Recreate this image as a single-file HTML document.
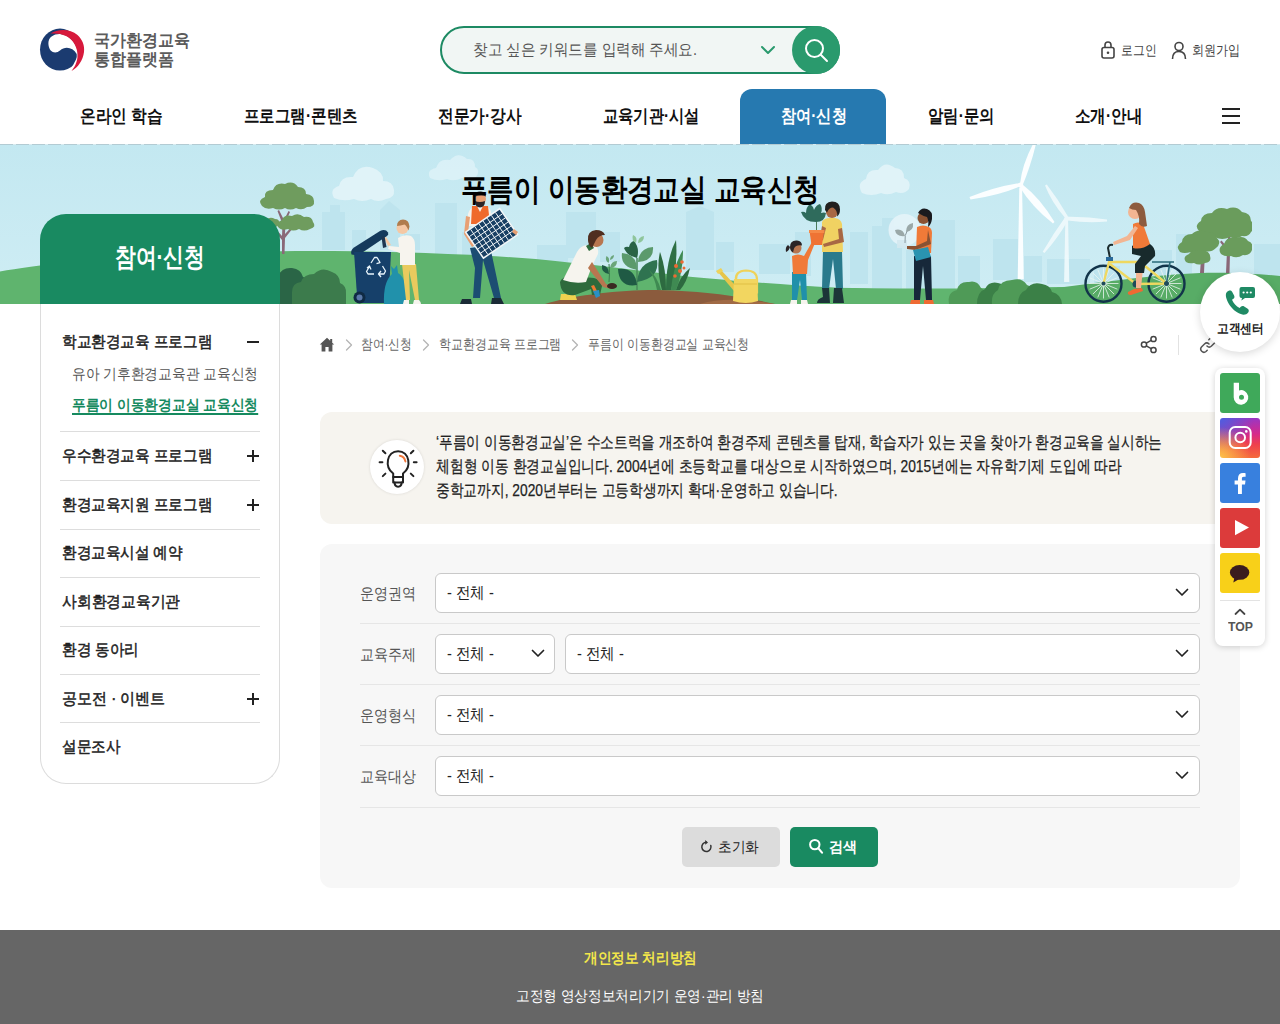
<!DOCTYPE html>
<html lang="ko">
<head>
<meta charset="utf-8">
<title>푸름이 이동환경교실 교육신청</title>
<style>
*{box-sizing:border-box;margin:0;padding:0}
html,body{width:1280px;height:1024px;overflow:hidden;background:#fff}
body{font-family:"Liberation Sans",sans-serif;color:#222;position:relative}
.abs{position:absolute}
.t{position:absolute;white-space:nowrap;line-height:1;transform-origin:0 0}
/* header */
#logo-txt{left:94px;top:32px;font-size:17px;font-weight:bold;color:#5b5b5b;line-height:18.5px}
#search{left:440px;top:26px;width:400px;height:48px;border:2px solid #1d8a63;border-radius:24px;background:#f1f6f4}
#search .ph{left:30px;top:14px;font-size:16px;color:#555}
#sbtn{left:792px;top:26px;width:48px;height:48px;border-radius:24px;background:#2a9a6d}
.util{font-size:14px;color:#444;top:43px}
.nav{z-index:4;top:107px;font-size:18px;font-weight:bold;color:#111}
#navact{left:740px;top:89px;width:146px;height:55px;z-index:3;background:#2679b0;border-radius:12px 12px 0 0}
#navline{left:0;top:144px;width:1280px;height:1px;background:repeating-linear-gradient(90deg,#b3cbd3 0,#b3cbd3 13px,#d8ebf0 13px,#d8ebf0 16px);z-index:2}
/* banner */
#banner{left:0;top:144px;width:1280px;height:160px;background:#c6e8f1;overflow:hidden}
#title{left:640px;top:174px;font-size:31px;font-weight:bold;color:#000}
/* sidebar */
#sidehead{left:40px;top:214px;width:240px;height:90px;background:#198a61;border-radius:26px 26px 0 0}
#sidehead .t{left:120px;top:30px;font-size:26px;font-weight:bold;color:#fff}
#sidebox{left:40px;top:304px;width:240px;height:480px;border:1px solid #dcdcdc;border-top:none;border-radius:0 0 26px 26px;background:#fff}
.m1{left:61px;font-size:16px;font-weight:normal;color:#222;-webkit-text-stroke:0.5px #222;margin-top:1px}
.m2{left:71px;font-size:15px;color:#555}
.msep{left:60px;width:200px;height:1px;background:#dddddd}
.pm{left:247px;width:12px;height:2px;background:#222}
.pmv{left:252px;width:2px;height:12px;background:#222}
/* breadcrumb */
.bc{top:337px;font-size:14px;color:#666}
/* info */
#info{left:320px;top:412px;width:920px;height:112px;background:#f6f4ef;border-radius:12px}
#info .t{left:116px;font-size:17px;color:#222;-webkit-text-stroke:0.25px #222}
/* form */
#form{left:320px;top:544px;width:920px;height:344px;background:#f7f7f7;border-radius:12px}
.lbl{left:360px;font-size:16px;color:#555}
.sel{height:40px;border:1px solid #c9c9c9;border-radius:6px;background:#fff}
.sel .t{left:11px;top:11px;font-size:16px;color:#222}
.fsep{left:360px;width:840px;height:1px;background:#e6e6e6}
/* footer */
#footer{left:0;top:930px;width:1280px;height:94px;background:#666666}
</style>
</head>
<body>
<!-- HEADER -->
<svg class="abs" style="left:38px;top:26px" width="48" height="48" viewBox="38 26 48 48">
  <ellipse cx="60" cy="49.600" rx="20" ry="21" fill="#1b3b70"/>
  <path d="M48.400 44 C48 37 54 33.800 60 34 C67 34.500 73.500 39.500 76.500 47 C77.600 50 78 53 77.800 56 C77.500 62 75 67 71.800 70.800 L70 70.800 C74.500 65.500 77.300 60 76.700 54 C73 47.300 65 46 60 50.500 C55.500 54.500 49 52.500 48.400 44Z" fill="#fff"/>
  <path d="M81 50 L81 60 L72 71.500 L70 71 Z" fill="#fff"/>
  <path d="M50.500 33.600 C58 28.500 70 28.500 77.500 35 C82.500 39.500 84.800 45.500 84 52 C83 60.500 78 67.500 71.500 70.900 C76 65.500 78.300 59 77.400 52.500 C76.300 45 72 39 66 36 C61 33.600 55.500 33 50.500 33.600Z" fill="#d7193c"/>
</svg>
<div class="t" id="logo-txt" style="left:94px;transform:scaleX(0.9412);">국가환경교육<br>통합플랫폼</div>

<div class="abs" id="search">
  <div class="t ph" style="left:30.5px;transform:scaleX(0.9097);">찾고 싶은 키워드를 입력해 주세요.</div>
  <svg class="abs" style="left:318px;top:16px" width="16" height="12" viewBox="0 0 16 12"><path d="M2 3 L8 9 L14 3" fill="none" stroke="#2a9a6d" stroke-width="2" stroke-linecap="round" stroke-linejoin="round"/></svg>
</div>
<div class="abs" id="sbtn">
  <svg class="abs" style="left:11px;top:11px" width="26" height="26" viewBox="0 0 26 26"><circle cx="11.5" cy="11.5" r="8.5" fill="none" stroke="#fff" stroke-width="2"/><path d="M18 18 L24 24" stroke="#fff" stroke-width="2" stroke-linecap="round"/></svg>
</div>

<svg class="abs" style="left:1100px;top:40px" width="16" height="20" viewBox="0 0 16 20"><rect x="2" y="7.5" width="12" height="10.5" rx="2" fill="none" stroke="#444" stroke-width="1.6"/><path d="M5 7.5 V5 a3 3 0 0 1 6 0 V7.5" fill="none" stroke="#444" stroke-width="1.6"/><circle cx="8" cy="12.8" r="1.3" fill="#444"/></svg>
<div class="t util" style="left:1121px;transform:scaleX(0.8452);">로그인</div>
<svg class="abs" style="left:1170px;top:40px" width="18" height="20" viewBox="0 0 18 20"><circle cx="9" cy="6.5" r="4" fill="none" stroke="#444" stroke-width="1.6"/><path d="M2.5 19 C2.5 13.5 5 11.5 9 11.5 C13 11.5 15.5 13.5 15.5 19" fill="none" stroke="#444" stroke-width="1.6"/></svg>
<div class="t util" style="left:1191.5px;transform:scaleX(0.8661);">회원가입</div>

<div class="abs" id="navline"></div>
<div class="abs" id="navact"></div>
<div class="t nav" style="left:80px;transform:scaleX(0.8683);">온라인 학습</div>
<div class="t nav" style="left:244px;transform:scaleX(0.8598);">프로그램·콘텐츠</div>
<div class="t nav" style="left:437.5px;transform:scaleX(0.8698);">전문가·강사</div>
<div class="t nav" style="left:602.5px;transform:scaleX(0.8465);">교육기관·시설</div>
<div class="t nav" style="left:780.6px;transform:scaleX(0.8436);color:#fff">참여·신청</div>
<div class="t nav" style="left:928px;transform:scaleX(0.8526);">알림·문의</div>
<div class="t nav" style="left:1074.7px;transform:scaleX(0.8603);">소개·안내</div>
<div class="abs" style="left:1222px;top:108px;width:18px;height:2px;background:#222"></div>
<div class="abs" style="left:1222px;top:115px;width:18px;height:2px;background:#222"></div>
<div class="abs" style="left:1222px;top:122px;width:18px;height:2px;background:#222"></div>

<!-- BANNER -->
<div class="abs" id="banner">
<svg id="bsvg" class="abs" style="left:0;top:0" width="1280" height="160" viewBox="0 144 1280 160">
<!--BS-->
<defs>
  <linearGradient id="sky" x1="0" y1="0" x2="0" y2="1"><stop offset="0" stop-color="#c3e8f1"/><stop offset="1" stop-color="#cfedf4"/></linearGradient>
  <clipPath id="tclip"><rect x="1150" y="144" width="102" height="160"/></clipPath>
</defs>
<rect x="0" y="144" width="1280" height="160" fill="url(#sky)"/>
<!-- clouds -->
<g fill="#e0f3f8">
  <path d="M334 198 q-5 -9 5 -12 q2 -10 14 -9 q6 -14 20 -9 q11 4 10 13 q10 0 11 9 q1 8 -8 9 q-8 4 -15 0 q-9 4 -17 0 q-11 3 -20 -1z"/>
  <path d="M430 178 q-4 -8 6 -10 q3 -10 14 -8 q8 -9 17 -1 q8 -1 8 8 q6 3 1 10 q-7 4 -14 1 q-8 4 -15 1 q-9 3 -17 -1z" opacity=".75"/>
  <path d="M862 193 q-6 -10 4 -14 q1 -10 12 -9 q7 -10 17 -2 q9 0 9 10 q8 3 5 11 q-5 6 -13 3 q-8 4 -15 1 q-10 4 -19 0z"/>
</g>
<!-- city silhouette -->
<g fill="#bee4ee">
  <path d="M322 250 V212 h8 v-7 h10 v7 h5 v38z M352 250 v-20 h14 v20z M380 250 V210 l9 -9 l11 9 V250z M404 250 v-16 h16 v16z M435 256 V203 h22 v53z M462 256 v-24 h18 v24z"/>
  <path d="M537 262 v-17 h31 v17z M566 258 V212 h30 v46z M600 262 v-30 h20 v30z M686 270 V212 l14 -6 l14 6 v58z M716 272 v-30 h18 v30z M759 274 v-30 h31 v30z M795 276 v-44 h16 v44z M850 284 v-52 h18 v52z"/>
  <path d="M872 290 v-64 h10 v-8 h12 v8 h8 v64z M906 290 v-40 h20 v40z M930 290 V220 h25 v70z M958 290 v-34 h22 v34z M993 280 V239 h25 v41z M1024 282 v-26 h18 v26z M1047 284 v-25 h43 v25z M1094 284 v-18 h26 v18z M1150 280 v-30 h22 v30z M1176 280 v-46 h16 v46z M1254 280 v-36 h26 v36z"/>
</g>
<!-- back grass (lighter, right side flat) -->
<path d="M760 304 V284 C840 290 940 289 1060 287 L1280 285 V304z" fill="#60b56f"/>
<!-- main hill -->
<path d="M0 271.500 C50 262.500 160 251 310 251 C400 251 500 255 560 261.500 C610 266.500 650 272 690 276.700 C730 280.500 780 284.500 840 288 L900 289 L900 304 H0z" fill="#5fb46e"/>
<!-- right hill -->
<path d="M1040 290 C1090 284 1140 276 1200 273 C1230 272 1260 274 1280 276 V304 H1040z" fill="#58ac66"/>
<!-- left tree -->
<g>
  <path d="M282 254 L284.5 254 L285 238 L293 228 L291.5 227 L285 234 L285.5 222 L290 212 L288.5 211 L284 220 L279 210 L277.5 211 L282.5 224 L282 236 L274 227 L272.5 228.5 L282 240z" fill="#8a6878"/>
  <g fill="#6f9c5e">
    <path d="M262 206 q-5 -6 3 -9 q-1 -7 8 -7 q3 -8 12 -6 q8 -4 13 3 q8 0 8 7 q8 1 8 7 q1 6 -7 6 q-5 4 -11 1 q-6 3 -11 0 q-6 3 -12 0 q-7 2 -11 -2z"/>
    <path d="M279 228 q-5 -5 3 -8 q2 -6 10 -4 q6 -4 12 1 q8 -1 9 5 q4 5 -3 7 q-6 3 -11 0 q-6 3 -11 0 q-6 2 -9 -1z"/>
    <path d="M262 226 q-3 -5 4 -6 q4 -4 9 -1 q5 0 4 5 q-2 4 -8 3 q-5 2 -9 -1z"/>
  </g>
</g>
<!-- dark bushes next to sidebar -->
<path d="M278 304 V276 q4 -9 14 -8 q9 1 11 9 q6 1 7 8 V304z" fill="#2a6546"/>
<path d="M292 304 v-12 q0 -9 9 -10 q3 -8 13 -8 q8 -8 18 -2 q8 3 8 11 q7 3 6 11 V304z" fill="#3c7b4c"/>
<!-- recycle bin -->
<g>
  <path d="M351.500 254.500 q-1.500 -4 2.500 -7 L380 231 q5.500 -2.500 8 1.500 q1 2 -1 3.500 L358 255.500z" fill="#153a5c"/>
  <path d="M354 252 H391 L388.5 303 H357.5z" fill="#16406a"/>
  <circle cx="359.5" cy="297.5" r="6" fill="#0f2a44"/><circle cx="359.5" cy="297.5" r="3" fill="#5a78a8"/>
  <g fill="none" stroke="#e8f4fb" stroke-width="1.3" stroke-linejoin="round">
    <path d="M371 263 l3.5 -5.5 h2.5 l3 5 M378 259 l2 3.5 l-3.5 1"/>
    <path d="M382.5 266 l3 5 l-1.5 3 h-5 M381 271 l-2.5 3 l2.5 3"/>
    <path d="M374 274 h-6 l-1.5 -2.5 l3 -5 M367 268 l2.5 -2 l1.5 3.5"/>
  </g>
</g>
<!-- garbage bag -->
<path d="M384 304 q-1 -22 8 -30 l-1 -8 l3 3 l3 -4 l1 8 q10 6 9.500 31z" fill="#2191ab"/>
<!-- kid at bin -->
<g>
  <path d="M402 264 h14 l3 36 h-4 l-6 -30 l1 30 h-4z" fill="#e9ca5e"/>
  <path d="M414 300 h5 q2 2 2 4 h-8z M404 300 h5 v4 h-6z" fill="#f6f4ee"/>
  <path d="M398 238 q6 -4 13 -2 q4 3 4 9 v20 h-15 v-12 l-12 -4 l1 -3 l10 1z" fill="#f7f4ee"/>
  <path d="M388 246 l-4 -8 l2 -1 l5 8z" fill="#f5c8a4"/>
  <path d="M381.500 237 l3 -1 l2 11 l-3.500 1z" fill="#1d3550"/>
  <circle cx="402.500" cy="228" r="6" fill="#f5c8a4"/>
  <path d="M397 226 q0 -6 6 -6.500 q6 0 6.500 7 l-1 4 q-2 -5 -4 -6 q-4 1 -7.500 1.500z" fill="#b07c4c"/>
</g>
<!-- solar panel man -->
<g>
  <path d="M470 248 l14 -2 l6 0 l11 52 h-7 l-11 -38 l-3 38 h-7 l2 -30z" fill="#1c4d72"/>
  <path d="M462 299 h9 l1 5 h-12z M492 298 h9 l3 6 h-13z" fill="#1a2a36"/>
  <path d="M468 214 q2 -7 8 -8 h9 q5 1 6 6 l-1 14 h-22z" fill="#f5f2ec"/>
  <path d="M472 206 h5 l3 6 l3 -6 h5 l2 18 h-19z" fill="#ef6a2c"/>
  <path d="M466 216 l4 1 l-2 16 l7 12 l-3 2 l-8 -13z" fill="#e8a074"/>
  <circle cx="480" cy="199" r="6" fill="#e8a074"/>
  <path d="M474 197 q1 -6 7 -5.500 q5 .5 5 5 q-5 -2 -12 .5z M475 201 q5 2 10 0 q0 6 -5 6.500 q-5 -.5 -5 -6.500z" fill="#2a2426"/>
  <g transform="translate(491.600 233.400) rotate(-34.500)">
    <rect x="-21.500" y="-16.500" width="43" height="33" fill="#f2f6f8"/>
    <rect x="-20" y="-15" width="40" height="30" fill="#183f63"/>
    <g stroke="#f2f6f8" stroke-width=".9">
      <path d="M-15 -15 v30 M-10 -15 v30 M-5 -15 v30 M0 -15 v30 M5 -15 v30 M10 -15 v30 M15 -15 v30 M-20 -10 h40 M-20 -5 h40 M-20 0 h40 M-20 5 h40 M-20 10 h40"/>
    </g>
  </g>
  <path d="M514 229 l4 3 l-2 3 l-4 -3z" fill="#e8a074"/>
</g>
<!-- soil -->
<path d="M545 304 C570 296 610 291 648 290 C700 290 745 297 775 304z" fill="#8b5b3d"/>
<path d="M700 304 C720 298 745 299 775 304z" fill="#a06a45"/>
<!-- kneeling woman -->
<g>
  <path d="M561 294 h14 l2 6 h-17z" fill="#efd24f"/>
  <path d="M560 282 q2 -6 12 -6 l22 2 q8 2 8 8 l-2 9 h-8 l-1 -6 l-16 6 q-14 2 -15 -13z" fill="#2e6a3c"/>
  <path d="M563 280 l14 -28 q3 -6 10 -7 l8 1 q4 2 3 8 l-6 12 l-6 16 q-12 2 -23 -2z" fill="#f6f4ee"/>
  <path d="M592 262 l14 22 l6 2 l-1 3 l-8 -2 l-15 -19z" fill="#b87650"/>
  <path d="M586 246 l5 -3 l3 5 l-5 3z" fill="#2e6a3c"/>
  <circle cx="596.500" cy="240" r="7" fill="#b87650"/>
  <path d="M588 240 q-1 -9 8 -10 q7 0 9 5 q-6 0 -9 5 q-2 4 -4 8 q-4 -3 -4 -8z" fill="#4f2e20"/>
  <path d="M591 286 l3 -1 l3 6 l-3 1z" fill="#ef7a32"/><path d="M593 291 l6 -1 l1 6 l-4 2z" fill="#2a8fc4"/>
  <ellipse cx="612" cy="286" rx="5" ry="3" fill="#3a2a22"/>
</g>
<!-- plants -->
<g>
  <path d="M609 282 q1 -10 0 -18" stroke="#3c7b4c" stroke-width="1" fill="none"/>
  <path d="M609 274 q-8 -1 -7 -9 q7 1 7 9z" fill="#1f5a44"/><path d="M610 268 q1 -7 7 -7 q0 7 -7 7z M608.500 263 q-4 -3 -2 -7 q4 2 2 7z M610 260 q0 -4 4 -5 q0 4 -4 5z" fill="#6aa57a"/>
  <path d="M637 290 V258" stroke="#4a8a5c" stroke-width="1.500" fill="none"/>
  <path d="M637 285 q-18 3 -19 -16 q17 -2 19 16z" fill="#1f5a44"/>
  <path d="M637 282 q2 -20 20 -22 q3 18 -20 22z" fill="#2f7350"/>
  <path d="M637 270 q-17 -3 -15 -17 q15 1 15 17z" fill="#5b9a6c"/>
  <path d="M638 262 q1 -14 15 -15 q1 14 -15 15z" fill="#5b9a6c"/>
  <path d="M637 258 q-10 -2 -13 -10 q2 -2 5 -1 q1 -5 5 -6 q6 7 3 17z" fill="#2a6346"/>
  <path d="M636 243 q-5 -3 -3 -8 q5 2 3 8z M638 243 q0 -6 6 -7 q0 6 -6 7z" fill="#8fc59b"/>
  <path d="M662 290 q-6 -22 -2 -38 q6 16 6 38z" fill="#2d6a40"/>
  <path d="M666 290 q0 -30 10 -50 q2 26 -5 50z" fill="#2f7044"/>
  <path d="M671 290 q2 -24 12 -40 q0 22 -7 40z" fill="#3f8a52"/>
  <path d="M676 290 q4 -14 14 -22 q-3 14 -10 22z" fill="#2d6a40"/>
  <path d="M657 290 q-2 -12 -8 -20 q8 6 12 20z" fill="#3f8a52"/>
  <g fill="#ee6a33"><circle cx="676" cy="266" r="2"/><circle cx="682" cy="262" r="1.800"/><circle cx="680" cy="271" r="2"/><circle cx="675" cy="276" r="1.800"/><circle cx="684" cy="268" r="1.500"/></g>
</g>
<!-- watering can -->
<g>
  <path d="M736 280 q-1 -9 10 -9.500 q11 0 11 9 v14" fill="none" stroke="#efd25a" stroke-width="2.200"/>
  <path d="M718 272 l3 -2 l14 15 l-1 6z" fill="#e6c54a"/>
  <path d="M716 271 l5 -3 l2 3 l-5 3z" fill="#efd25a"/>
  <path d="M734 279 h23 l1 22 q-12 4 -25 0z" fill="#f2d660"/>
  <path d="M734 284 h23" stroke="#e0bf45" stroke-width="1"/>
</g>
<!-- girl + adult with pot -->
<g>
  <path d="M792 272 h14 l1 28 h-5 l-2 -20 l-3 20 h-5z" fill="#2090aa"/>
  <path d="M791 300 h6 v4 h-7z M801 300 h6 l1 4 h-7z" fill="#f6f4ee"/>
  <path d="M792 256 q6 -3 12 0 l8 -14 l3 1 l-7 17 l-1 14 h-14z" fill="#f07a38"/>
  <circle cx="796" cy="248" r="5.500" fill="#b87650"/>
  <path d="M790 247 q0 -7 7 -6.500 q5 .5 5 5 q-6 -1 -8 3 l-1 4 q-3 -2 -3 -5.500z M788 245 q-3 2 -2 7 q3 -1 4 -5z" fill="#2a2426"/>
  <path d="M823 251 h19 l1 38 h-7 l-3 -30 l-4 30 h-7z" fill="#2a7a8c"/>
  <path d="M817 303 q0 -4 6 -6 l-1 -9 h7 l1 15z M834 288 h8 l2 15 h-11z" fill="#1c3538"/>
  <path d="M822 222 q2 -4 8 -4 h5 q6 1 7 6 l1 28 h-21z" fill="#f0d262"/>
  <path d="M822 226 l4 2 l-3 12 l-8 4 l-1 -3 l6 -4z" fill="#a86844"/>
  <path d="M842 228 l2 14 l-20 5 l-1 -3 l16 -5 l-1 -10z" fill="#a86844"/>
  <circle cx="832" cy="212" r="6" fill="#a86844"/>
  <path d="M825 210 q-1 -8 7 -8.500 q8 0 8 8 q0 5 -3 7 q1 -6 -4 -9 q-4 0 -6 5z" fill="#22201f"/>
  <path d="M809.500 231 h14.500 l-2 14 h-10.500z" fill="#ef7334"/><path d="M809 230 h15.500 v3 h-15.500z" fill="#f58a48"/>
  <path d="M816.500 230 V210" stroke="#4a7a5a" stroke-width="1"/>
  <path d="M816 222 q-12 0 -15 -10 q3 -1 5 1 q0 -6 4 -9 q3 2 4 6 q2 -5 6 -6 q3 4 1 9 q3 -1 5 0 q-1 9 -10 9z" fill="#2f6b5c"/>
</g>
<!-- bulb woman -->
<g>
  <path d="M914 256 h17 l1 44 h-6 l-3 -34 l-3 34 h-6z" fill="#17283a"/>
  <path d="M911 300 h9 v4 h-10z M924 300 h9 l1 4 h-10z" fill="#ef6a33"/>
  <circle cx="904.500" cy="230" r="16" fill="#e4f3f8" opacity=".92"/>
  <path d="M897 240 h10 v8 h-10z" fill="#d3e8ee" opacity=".9"/>
  <path d="M905 243 q-1 -8 3 -14" stroke="#8a9aa0" stroke-width="1" fill="none"/>
  <path d="M905 236 q-9 1 -10 -6 q8 -2 10 6z M906 232 q0 -8 7 -9 q1 8 -7 9z" fill="#9aa8a8"/>
  <path d="M917 227 q6 -3 12 0 q3 2 3 6 l-1 20 h-15z" fill="#f07a38"/>
  <path d="M928 230 l3 14 l-16 6 l-8 -1 l0 -3 l9 0 l11 -5z" fill="#8a5232"/>
  <path d="M913 250 l15 -3 l3 10 l-15 4z" fill="#2a93b0"/>
  <circle cx="923.500" cy="218" r="6" fill="#8a5232"/>
  <path d="M918 213 q3 -6 9 -4 q6 2 5 10 q-1 6 -4 8 q1 -6 -1 -10 q-4 -1 -9 -4z" fill="#1a1a1e"/>
</g>
<!-- wind turbines -->
<g fill="#fbfeff">
  <path d="M1019.300 188 h2.800 l1.600 91 h-6z"/>
  <path d="M1020 184 Q1022 165 1033 144 h3 Q1030 168 1022.500 185.500z"/>
  <path d="M1019.500 186.500 Q1000 195 970.500 199.500 l-1 -2.500 Q995 187 1019 183.200z"/>
  <path d="M1022.500 184.500 Q1040 198 1054.500 222 l-1.500 1.500 Q1032 207 1020 187.500z"/>
  <circle cx="1020.600" cy="185" r="2.600"/>
</g>
<g fill="#f3fbfd" opacity=".85">
  <path d="M1065.300 221 h2.800 l1.200 61 h-5.200z"/>
  <path d="M1065.200 218 Q1052 203 1045 185.500 l1.800 -1 Q1058 199 1068 216.500z"/>
  <path d="M1067 216.800 Q1088 216.500 1107 219.500 l0 2 Q1088 223.500 1067.500 220.500z"/>
  <path d="M1068.200 220 Q1058 238 1044.500 253 l-1.800 -1.200 Q1053 234 1065 217.500z"/>
  <circle cx="1066.700" cy="218.500" r="2.300"/>
</g>
<!-- middle bushes -->
<g>
  <path d="M949 304 q-2 -12 8 -14 q2 -9 12 -8 q8 -2 12 6 q6 2 6 16z" fill="#4f9a57"/>
  <path d="M977 304 q0 -12 8 -15 q4 -8 13 -6 q8 1 9 10 q4 4 3 11z" fill="#3b8047"/>
  <path d="M992 304 q-1 -10 6 -14 q2 -10 14 -10 q10 -3 15 5 q8 2 8 12 q3 3 2 7z" fill="#4f9a57"/>
  <path d="M1018 304 q0 -11 8 -14 q5 -9 16 -6 q8 1 10 8 q9 2 10 12z" fill="#3b8047"/>
</g>
<!-- right tree -->
<g clip-path="url(#tclip)">
  <path d="M1200 273 l1 -14 l-4 -6 l1.500 -1 l3.500 5 l1 -6 h2 l-.5 8 l4 -5 l1.500 1 l-5.500 7 l-.5 11z" fill="#8a6878"/>
  <path d="M1226 273 l1 -22 l-7 -9 l1.500 -1.500 l6 7 l.5 -12 h2.500 l-.5 14 l8 -9 l1.500 1.500 l-9.500 11 l-.5 20z" fill="#8a6878"/>
  <g fill="#6a9c5c">
    <path d="M1200 232 q-7 -6 1 -11 q1 -8 11 -8 q5 -7 15 -4 q9 -4 15 3 q9 1 9 9 q6 5 0 11 q-2 5 -9 4 q-6 4 -12 1 q-8 4 -15 0 q-8 2 -15 -5z"/>
    <path d="M1180 252 q-5 -6 2 -10 q1 -8 10 -8 q6 -6 14 -2 q9 -1 11 6 q5 5 -1 10 q-5 5 -12 3 q-7 4 -13 1 q-7 2 -11 0z"/>
    <path d="M1221 254 q-4 -6 3 -10 q3 -8 12 -6 q8 -3 12 3 q6 2 4 9 q-2 6 -9 5 q-6 4 -12 1 q-6 1 -10 -2z"/>
    <path d="M1186 262 q-4 -5 3 -8 q4 -6 12 -3 q8 -1 9 5 q2 6 -5 7 q-6 3 -11 0 q-5 1 -8 -1z"/>
  </g>
</g>
<!-- cyclist -->
<g>
  <g fill="none">
    <circle cx="1103.500" cy="283.700" r="18" stroke="#12344a" stroke-width="2.400"/>
    <circle cx="1166.500" cy="283.700" r="18" stroke="#12344a" stroke-width="2.400"/>
    
    
    <g stroke="#eaf4f0" stroke-width=".8">
      <path d="M1103.500 268.500 v30 M1088.500 283.500 h30 M1092.900 272.900 l21.200 21.200 M1092.900 294.100 l21.200 -21.200 M1097.800 269.600 l11.400 27.800 M1089.600 289.200 l27.800 -11.400 M1089.600 277.800 l27.800 11.400 M1097.800 297.400 l11.400 -27.800"/>
      <path d="M1166.500 268.500 v30 M1151.500 283.500 h30 M1155.900 272.900 l21.200 21.200 M1155.900 294.100 l21.200 -21.200 M1160.800 269.600 l11.400 27.800 M1152.600 289.200 l27.800 -11.400 M1152.600 277.800 l27.800 11.400 M1160.800 297.400 l11.400 -27.800"/>
    </g>
    <path d="M1103.500 283.500 L1110 258 M1110 262 L1140 262 L1166.500 283.500 M1110 264 L1136 284 L1166.500 283.500 M1136 284 L1143 258" stroke="#efd860" stroke-width="2.300" stroke-linejoin="round"/>
    <path d="M1110 258 l-2 -10 q1 -4 5 -3" stroke="#1a2a2c" stroke-width="2"/>
    <path d="M1152 262 h22 M1170 262 l-3.500 21" stroke="#2a6a7a" stroke-width="1.600"/>
  </g>
  <path d="M1106 257 h7 v4 h-7z" fill="#2a6a9a"/>
  <circle cx="1136" cy="284" r="3.500" fill="#1f4a5a"/><circle cx="1166.500" cy="283.500" r="2.500" fill="#1f4a5a"/><circle cx="1103.500" cy="283.500" r="2" fill="#1f4a5a"/>
  <path d="M1136 268 l7 1 l-2 19 h-5z" fill="#f2b592"/><path d="M1132 246 q8 -6 18 -2 q6 4 5 12 l-10 10 l-1 7 h-9 l0 -9 l6 -8 l-9 -2z" fill="#182a2c"/>
  <path d="M1134 289 l8 -1 l1 3 l-12 4 q-4 0 -3 -3z" fill="#ef6a33"/>
  <path d="M1133 224 q5 -3 10 0 l7 20 q-8 6 -17 4z" fill="#f07a38"/>
  <path d="M1135 226 l3 2 l-8 12 l-16 5 l-1 -3 l14 -6z" fill="#f2b592"/>
  <circle cx="1135" cy="212" r="7" fill="#f2b592"/>
  <path d="M1129 208 q3 -7 10 -5 q5 2 6 9 l2 14 q-5 2 -8 -2 q1 -8 -3 -14 q-4 0 -7 -2z" fill="#8d5b3e"/>
</g>
<!--BE-->
</svg>
</div>
<div class="t" id="title" style="left:460.5px;transform:scaleX(0.8531);">푸름이 이동환경교실 교육신청</div>

<!-- SIDEBAR -->
<div class="abs" id="sidebox"></div>
<div class="abs" id="sidehead"><div class="t" style="left:75px;transform:scaleX(0.7988);">참여·신청</div></div>
<div class="t m1" style="left:61.7px;transform:scaleX(0.9139);top:333px">학교환경교육 프로그램</div>
<div class="abs pm" style="top:341px"></div>
<div class="t m2" style="left:71.6px;transform:scaleX(0.9157);top:366px">유아 기후환경교육관 교육신청</div>
<div class="t m2" style="left:71.6px;transform:scaleX(0.9157);top:397px;color:#168a5f;font-weight:bold;text-decoration:underline;text-underline-offset:3px;text-decoration-thickness:2px">푸름이 이동환경교실 교육신청</div>
<div class="abs msep" style="top:431px"></div>
<div class="t m1" style="left:61.7px;transform:scaleX(0.9139);top:447px">우수환경교육 프로그램</div>
<div class="abs pm" style="top:455px"></div><div class="abs pmv" style="top:450px"></div>
<div class="abs msep" style="top:480px"></div>
<div class="t m1" style="left:61.7px;transform:scaleX(0.9139);top:496px">환경교육지원 프로그램</div>
<div class="abs pm" style="top:504px"></div><div class="abs pmv" style="top:499px"></div>
<div class="abs msep" style="top:529px"></div>
<div class="t m1" style="left:61.7px;transform:scaleX(0.9105);top:544px">환경교육시설 예약</div>
<div class="abs msep" style="top:577px"></div>
<div class="t m1" style="left:61.7px;transform:scaleX(0.9227);top:593px">사회환경교육기관</div>
<div class="abs msep" style="top:626px"></div>
<div class="t m1" style="left:61.7px;transform:scaleX(0.9082);top:641px">환경 동아리</div>
<div class="abs msep" style="top:674px"></div>
<div class="t m1" style="left:61.7px;transform:scaleX(0.9372);top:690px">공모전 · 이벤트</div>
<div class="abs pm" style="top:698px"></div><div class="abs pmv" style="top:693px"></div>
<div class="abs msep" style="top:722px"></div>
<div class="t m1" style="left:61.7px;transform:scaleX(0.9109);top:738px">설문조사</div>

<!-- BREADCRUMB -->
<svg class="abs" style="left:319px;top:337px" width="16" height="15" viewBox="0 0 16 15"><path d="M8 0.800 L11.200 3.800 V2 H13.200 V5.700 L15.200 7.600 H13.400 V14.400 H9.600 V10 H6.400 V14.400 H2.600 V7.600 H0.800 Z" fill="#555"/></svg>
<svg class="abs" style="left:344.5px;top:339px" width="8" height="12" viewBox="0 0 8 12"><path d="M1.500 1 L6.500 6 L1.500 11" fill="none" stroke="#b5b5b5" stroke-width="1.300" stroke-linecap="round" stroke-linejoin="round"/></svg>
<div class="t bc" style="left:361.3px;transform:scaleX(0.8373);">참여·신청</div>
<svg class="abs" style="left:421.5px;top:339px" width="8" height="12" viewBox="0 0 8 12"><path d="M1.500 1 L6.500 6 L1.500 11" fill="none" stroke="#b5b5b5" stroke-width="1.300" stroke-linecap="round" stroke-linejoin="round"/></svg>
<div class="t bc" style="left:438.7px;transform:scaleX(0.85);">학교환경교육 프로그램</div>
<svg class="abs" style="left:570.8px;top:339px" width="8" height="12" viewBox="0 0 8 12"><path d="M1.500 1 L6.500 6 L1.500 11" fill="none" stroke="#b5b5b5" stroke-width="1.300" stroke-linecap="round" stroke-linejoin="round"/></svg>
<div class="t bc" style="left:587.9px;transform:scaleX(0.8499);">푸름이 이동환경교실 교육신청</div>
<svg class="abs" style="left:1140px;top:335px" width="18" height="19" viewBox="0 0 18 19"><circle cx="13.5" cy="4" r="2.6" fill="none" stroke="#444" stroke-width="1.5"/><circle cx="4" cy="9.5" r="2.6" fill="none" stroke="#444" stroke-width="1.5"/><circle cx="13.5" cy="15" r="2.6" fill="none" stroke="#444" stroke-width="1.5"/><path d="M6.3 8.2 L11.2 5.3 M6.3 10.8 L11.2 13.7" stroke="#444" stroke-width="1.5"/></svg>
<div class="abs" style="left:1178px;top:335px;width:1px;height:20px;background:#e2e2e2"></div>
<svg class="abs" style="left:1199px;top:336px" width="18" height="18" viewBox="0 0 18 18"><path d="M8 10 a3.2 3.2 0 0 0 4.5 0 l3-3 a3.2 3.2 0 0 0 -4.5 -4.5 l-1.2 1.2 M10 8 a3.2 3.2 0 0 0 -4.5 0 l-3 3 a3.2 3.2 0 0 0 4.5 4.5 l1.2 -1.2" fill="none" stroke="#555" stroke-width="1.5" stroke-linecap="round"/></svg>

<!-- INFO -->
<div class="abs" id="info">
  <div class="abs" style="left:50px;top:28px;width:54px;height:54px;border-radius:27px;background:#fff;box-shadow:0 0 3px rgba(0,0,0,.12)"></div>
  <svg class="abs" style="left:54px;top:31px" width="48" height="48" viewBox="374 443 48 48">
    <g fill="none" stroke="#222" stroke-width="2" stroke-linecap="round" stroke-linejoin="round">
      <path d="M393.2 476.900 v-3.400 c-9 -6.500 -6.500 -22.300 4.900 -22.300 c11.400 0 13.900 15.800 4.900 22.300 v3.400z"/>
      <path d="M393.200 476.900 v5.500 h9.800 v-5.500"/>
      <path d="M394.600 482.600 c0 5.500 7 5.500 7 0"/>
      <path d="M379.600 462.200 h2.800 M413.800 462.200 h2.800 M382.800 450.700 l2.600 2.500 M413.400 450.700 l-2.600 2.500 M382.800 476.100 l2.600 -2.500 M413.400 476.100 l-2.600 -2.500"/>
    </g>
    <path d="M399.800 455.800 c3 .6 5 2.700 5.600 5.600" fill="none" stroke="#f0783c" stroke-width="2" stroke-linecap="round"/>
  </svg>
  <div class="t" style="left:116.3px;transform:scaleX(0.8051);top:22px">‘푸름이 이동환경교실’은 수소트럭을 개조하여 환경주제 콘텐츠를 탑재, 학습자가 있는 곳을 찾아가 환경교육을 실시하는</div>
  <div class="t" style="left:116.3px;transform:scaleX(0.8102);top:46px">체험형 이동 환경교실입니다. 2004년에 초등학교를 대상으로 시작하였으며, 2015년에는 자유학기제 도입에 따라</div>
  <div class="t" style="left:116.3px;transform:scaleX(0.8085);top:70px">중학교까지, 2020년부터는 고등학생까지 확대·운영하고 있습니다.</div>
</div>

<!-- FORM -->
<div class="abs" id="form"></div>
<div class="t lbl" style="left:359.8px;transform:scaleX(0.8781);top:586px">운영권역</div>
<div class="abs sel" style="left:435px;top:573px;width:765px"><div class="t" style="left:10.5px;transform:scaleX(0.9099);">- 전체 -</div></div>
<div class="abs fsep" style="top:623px"></div>
<div class="t lbl" style="left:359.8px;transform:scaleX(0.8781);top:647px">교육주제</div>
<div class="abs sel" style="left:435px;top:634px;width:120px"><div class="t" style="left:10.5px;transform:scaleX(0.9099);">- 전체 -</div></div>
<div class="abs sel" style="left:565px;top:634px;width:635px"><div class="t" style="left:10.5px;transform:scaleX(0.9099);">- 전체 -</div></div>
<div class="abs fsep" style="top:684px"></div>
<div class="t lbl" style="left:359.8px;transform:scaleX(0.8781);top:708px">운영형식</div>
<div class="abs sel" style="left:435px;top:695px;width:765px"><div class="t" style="left:10.5px;transform:scaleX(0.9099);">- 전체 -</div></div>
<div class="abs fsep" style="top:745px"></div>
<div class="t lbl" style="left:359.8px;transform:scaleX(0.8781);top:769px">교육대상</div>
<div class="abs sel" style="left:435px;top:756px;width:765px"><div class="t" style="left:10.5px;transform:scaleX(0.9099);">- 전체 -</div></div>
<div class="abs fsep" style="top:807px"></div>
<svg class="abs" style="left:1175px;top:588px" width="14" height="9" viewBox="0 0 14 9"><path d="M1.5 1.5 L7 7 L12.500 1.500" fill="none" stroke="#222" stroke-width="1.700" stroke-linecap="round" stroke-linejoin="round"/></svg>
<svg class="abs" style="left:531px;top:649px" width="14" height="9" viewBox="0 0 14 9"><path d="M1.5 1.5 L7 7 L12.500 1.500" fill="none" stroke="#222" stroke-width="1.700" stroke-linecap="round" stroke-linejoin="round"/></svg>
<svg class="abs" style="left:1175px;top:649px" width="14" height="9" viewBox="0 0 14 9"><path d="M1.5 1.5 L7 7 L12.500 1.500" fill="none" stroke="#222" stroke-width="1.700" stroke-linecap="round" stroke-linejoin="round"/></svg>
<svg class="abs" style="left:1175px;top:710px" width="14" height="9" viewBox="0 0 14 9"><path d="M1.5 1.5 L7 7 L12.500 1.500" fill="none" stroke="#222" stroke-width="1.700" stroke-linecap="round" stroke-linejoin="round"/></svg>
<svg class="abs" style="left:1175px;top:771px" width="14" height="9" viewBox="0 0 14 9"><path d="M1.5 1.5 L7 7 L12.500 1.500" fill="none" stroke="#222" stroke-width="1.700" stroke-linecap="round" stroke-linejoin="round"/></svg>

<div class="abs" style="left:682px;top:827px;width:98px;height:40px;background:#dcdcdc;border-radius:5px"><svg class="abs" style="left:18px;top:12px" width="14" height="16" viewBox="700 839 14 16"><path d="M710.800 845.500 a4.600 4.600 0 1 1 -4.400 -3.200" fill="none" stroke="#333" stroke-width="1.500" stroke-linecap="round"/><path d="M705.200 840 l2.800 2.400 l-2.800 2.400z" fill="#333"/></svg><div class="t" style="left:36px;transform:scaleX(0.9111);top:12px;font-size:15px;color:#222">초기화</div></div>
<div class="abs" style="left:790px;top:827px;width:88px;height:40px;background:#198a61;border-radius:5px"><svg class="abs" style="left:17px;top:10px" width="18" height="18" viewBox="807 837 18 18"><circle cx="814.800" cy="844.600" r="4.700" fill="none" stroke="#fff" stroke-width="2"/><path d="M818.400 848.400 L822 852.600" stroke="#fff" stroke-width="2.200" stroke-linecap="round"/></svg><div class="t" style="left:38.8px;transform:scaleX(0.94);top:12px;font-size:15px;font-weight:bold;color:#fff">검색</div></div>

<!-- FOOTER -->
<div class="abs" id="footer">
  <div class="t" style="left:583.5px;transform:scaleX(0.91);top:20px;font-size:15px;font-weight:bold;color:#f3e64a">개인정보 처리방침</div>
  <div class="t" style="left:516px;transform:scaleX(0.9101);top:58px;font-size:15px;color:#fff">고정형 영상정보처리기기 운영·관리 방침</div>
</div>

<!-- FLOATING -->
<div class="abs" id="cs" style="left:1200px;top:272px;width:80px;height:80px;border-radius:40px;background:#fff;box-shadow:0 2px 8px rgba(0,0,0,.15)">
  <svg class="abs" style="left:22px;top:13px" width="36" height="32" viewBox="1222 285 36 32">
    <path d="M1228.300 291 c1.500 -.8 3 -.6 3.800 .8 l2 3.600 c.700 1.300 .300 2.600 -.700 3.400 l-1.400 1 c1.400 3.400 4.200 6.400 7.600 8.200 l1.200 -1.300 c.900 -.900 2.200 -1.100 3.400 -.300 l3.500 2.300 c1.300 .900 1.400 2.400 .500 3.700 c-2.200 3 -6.200 2.800 -10.300 .400 c-5.200 -3 -9.600 -8.300 -11.300 -13.800 c-1.300 -4 -.900 -6.600 1.700 -8z" fill="#1f8a64"/>
    <path d="M1241.500 287 h11.500 a2 2 0 0 1 2 2 v7 a2 2 0 0 1 -2 2 h-8 l-3.600 2.600 l.600 -2.600 h-.500 a2 2 0 0 1 -2 -2 v-7 a2 2 0 0 1 2 -2z" fill="#1f8a64"/>
    <circle cx="1243.600" cy="292.500" r="1.100" fill="#fff"/><circle cx="1247.200" cy="292.500" r="1.100" fill="#fff"/><circle cx="1250.800" cy="292.500" r="1.100" fill="#fff"/>
  </svg>
  <div class="t" style="left:17px;transform:scaleX(0.9038);top:50px;font-size:13px;font-weight:bold;color:#222">고객센터</div>
</div>
<div class="abs" id="sns" style="left:1215px;top:368px;width:50px;height:278px;background:#fff;border-radius:8px;box-shadow:0 1px 6px rgba(0,0,0,.18)">
  <div class="abs" style="left:5px;top:5px;width:40px;height:40px;background:#3fa95a;border-radius:3px"><svg class="abs" style="left:0;top:0" width="40" height="40" viewBox="0 0 40 40"><path d="M13.700 9.800 h5.300 v7.600 a7.300 7.300 0 1 1 -5.300 6.900z M19 24.200 a2.500 2.500 0 1 0 5 0 a2.500 2.500 0 1 0 -5 0z" fill="#fff" fill-rule="evenodd"/></svg></div>
  <div class="abs" style="left:5px;top:50px;width:40px;height:40px;background:radial-gradient(circle at 0% 100%,#fdc34a 0%,rgba(253,195,74,0) 55%),radial-gradient(circle at 0% 0%,#4c5fe0 0%,rgba(76,95,224,0) 60%),linear-gradient(180deg,#9a36c4 0%,#d6298a 40%,#ee3f4e 65%,#f56a3c 100%);border-radius:3px"><svg class="abs" style="left:0;top:0" width="40" height="40" viewBox="0 0 40 40"><rect x="9.700" y="9" width="21" height="21" rx="5.500" fill="none" stroke="#fff" stroke-width="2"/><circle cx="20.200" cy="19.500" r="4.800" fill="none" stroke="#fff" stroke-width="2"/><circle cx="26.300" cy="13.400" r="1.300" fill="#fff"/></svg></div>
  <div class="abs" style="left:5px;top:95px;width:40px;height:40px;background:#3880de;border-radius:3px"><svg class="abs" style="left:0;top:0" width="40" height="40" viewBox="0 0 40 40"><path d="M18 31 V21.500 h-3.400 v-4 H18 v-2.300 c0 -3.400 2 -5.200 5 -5.200 c1.200 0 2.200 .100 2.600 .200 v3.500 h-1.800 c-1.500 0 -1.900 .700 -1.900 1.800 v2 h3.600 l-.500 4 h-3.100 V31z" fill="#fff"/></svg></div>
  <div class="abs" style="left:5px;top:140px;width:40px;height:40px;background:#dc3b3b;border-radius:3px"><svg class="abs" style="left:0;top:0" width="40" height="40" viewBox="0 0 40 40"><path d="M15 12 L29 19.600 L15 27.200z" fill="#fff"/></svg></div>
  <div class="abs" style="left:5px;top:185px;width:40px;height:40px;background:#f8d019;border-radius:3px"><svg class="abs" style="left:0;top:0" width="40" height="40" viewBox="0 0 40 40"><ellipse cx="19.600" cy="19.400" rx="9.700" ry="7.400" fill="#3a1c1e"/><path d="M14.500 24 l-1.200 5.600 l6 -3.600z" fill="#3a1c1e"/></svg></div>
  <div class="abs" style="left:5px;top:232px;width:40px;height:1px;background:#e3e3e3"></div>
  <svg class="abs" style="left:19px;top:240px" width="12" height="8" viewBox="0 0 12 8"><path d="M1.500 6 L6 1.700 L10.500 6" fill="none" stroke="#444" stroke-width="1.800" stroke-linecap="round" stroke-linejoin="round"/></svg>
  <div class="t" style="left:13px;transform:scaleX(0.9434);top:252px;font-size:13px;font-weight:bold;color:#555">TOP</div>
</div>
</body>
</html>
